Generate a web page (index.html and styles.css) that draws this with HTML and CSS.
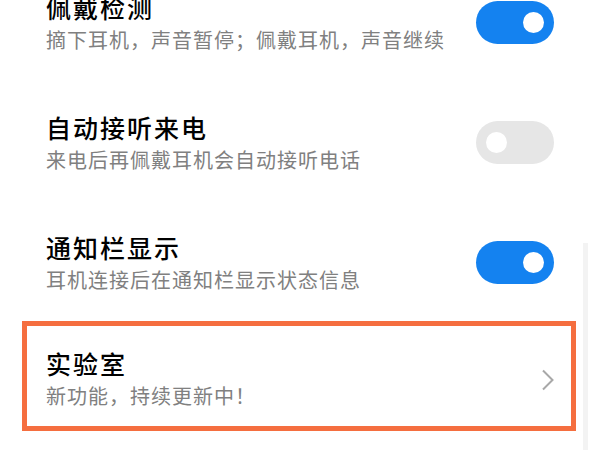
FILE: index.html
```html
<!DOCTYPE html>
<html lang="zh-CN">
<head>
    <meta charset="UTF-8">
    <meta name="viewport" content="width=device-width, initial-scale=1.0">
    <title>耳机设置</title>
    <link rel="stylesheet" href="styles.css">
</head>
<body>
    <div class="settings">
        <div class="row">
            <div class="text">
                <div class="title">佩戴检测</div>
                <div class="desc">摘下耳机，声音暂停；佩戴耳机，声音继续</div>
            </div>
            <span class="switch on"></span>
        </div>

        <div class="row">
            <div class="text">
                <div class="title">自动接听来电</div>
                <div class="desc">来电后再佩戴耳机会自动接听电话</div>
            </div>
            <span class="switch"></span>
        </div>

        <div class="row">
            <div class="text">
                <div class="title">通知栏显示</div>
                <div class="desc">耳机连接后在通知栏显示状态信息</div>
            </div>
            <span class="switch on"></span>
        </div>

        <div class="row row-marked">
            <div class="text">
                <div class="title">实验室</div>
                <div class="desc">新功能，持续更新中！</div>
            </div>
            <svg class="chevron" width="14" height="22" viewBox="0 0 14 22">
                <path d="M2 1.5 L11.5 11 L2 20.5" fill="none" stroke="#a8a8a8" stroke-width="2"/>
            </svg>
        </div>
    </div>

    <div class="scrollbar"></div>
</body>
</html>
```

FILE: styles.css
```css
body {
    margin: 0;
    background: #fff;
    font-family: "Noto Sans CJK SC", "Noto Sans", sans-serif;
    overflow: hidden;
    height: 450px;
    position: relative;
}

.settings {
    margin-top: -38px;
}

.row {
    display: flex;
    align-items: center;
    justify-content: space-between;
    height: 120px;
    padding: 0 46px;
    box-sizing: border-box;
}

.text {
    display: flex;
    flex-direction: column;
}

.title {
    font-size: 25px;
    line-height: 30px;
    letter-spacing: 2px;
    font-weight: 500;
    color: #000;
}

.desc {
    margin-top: 5px;
    font-size: 20px;
    line-height: 26px;
    letter-spacing: 1px;
    color: #808080;
}

/* переключатель */
.switch {
    position: relative;
    width: 78px;
    height: 43px;
    border-radius: 22px;
    background: #e6e6e6;
    flex-shrink: 0;
}

.switch::after {
    content: "";
    position: absolute;
    top: 11px;
    left: 10px;
    width: 21px;
    height: 21px;
    border-radius: 50%;
    background: #fff;
}

.switch.on {
    background: #1482f0;
}

.switch.on::after {
    left: auto;
    right: 10px;
}

.row-marked {
    height: 110px;
    margin: -1px 24px 0 22px;
    padding: 0 16px 0 19px;
    border: 5px solid #f56e3f;
}

.row-marked .text {
    margin-top: 5px;
}

.chevron {
    margin-top: 8px;
}

.scrollbar {
    position: absolute;
    right: 12px;
    top: 243px;
    bottom: 0;
    width: 5px;
    background: #f3f3f3;
}
```
